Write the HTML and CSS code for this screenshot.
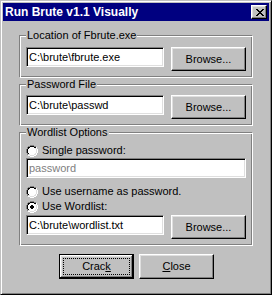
FILE: index.html
```html
<!DOCTYPE html>
<html lang="en">
<head>
<meta charset="utf-8">
<title>Run Brute v1.1 Visually</title>
<link rel="stylesheet" href="styles.css">
</head>
<body>
<svg class="defs" width="0" height="0" aria-hidden="true">
  <symbol id="radio" viewBox="0 0 12 12">
    <path fill="#808080" d="M4 0h4v1H4z M2 1h2v1H2z M8 1h2v1H8z M1 2h1v2H1z M0 4h1v4H0z M1 8h1v2H1z"/>
    <path fill="#000" d="M4 1h4v1H4z M2 2h2v1H2z M8 2h2v1H8z M2 3h1v1H2z M1 4h1v4H1z M2 8h1v1H2z"/>
    <path fill="#fff" d="M4 2h4v1H4z M10 2h1v1h-1z M3 3h6v1H3z M10 3h1v1h-1z M2 4h8v4H2z M11 4h1v4h-1z M3 8h6v1H3z M10 8h1v1h-1z M4 9h4v1H4z M10 9h1v1h-1z M2 10h2v1H2z M8 10h2v1H8z M4 11h4v1H4z"/>
    <path fill="#dfdfdf" d="M9 3h1v1H9z M10 4h1v4h-1z M9 8h1v1H9z M2 9h2v1H2z M8 9h2v1H8z M4 10h4v1H4z"/>
  </symbol>
</svg>
<div class="window">
  <div class="titlebar">
    <span class="title">Run Brute v1.1 Visually</span>
    <span class="caption-btn">
      <svg width="8" height="7" viewBox="0 0 8 7" shape-rendering="crispEdges"><path fill="#000" d="M0 0h2v1H0z M6 0h2v1H6z M1 1h2v1H1z M5 1h2v1H5z M2 2h4v1H2z M3 3h2v1H3z M2 4h4v1H2z M1 5h2v1H1z M5 5h2v1H5z M0 6h2v1H0z M6 6h2v1H6z"/></svg>
    </span>
  </div>
  <div class="client">
    <fieldset class="group g1">
      <legend>Location of Fbrute.exe</legend>
      <div class="row">
        <div class="edit">C:\brute\fbrute.exe</div>
        <div class="btn">Browse...</div>
      </div>
    </fieldset>
    <fieldset class="group g2">
      <legend>Password File</legend>
      <div class="row">
        <div class="edit">C:\brute\passwd</div>
        <div class="btn">Browse...</div>
      </div>
    </fieldset>
    <fieldset class="group g3">
      <legend>Wordlist Options</legend>
      <div class="radio opt-single">
        <svg width="12" height="12" shape-rendering="crispEdges"><use href="#radio"/></svg>
        <span>Single password:</span>
      </div>
      <div class="edit wide disabled">password</div>
      <div class="radio opt-user">
        <svg width="12" height="12" shape-rendering="crispEdges"><use href="#radio"/></svg>
        <span>Use username as password.</span>
      </div>
      <div class="radio opt-wordlist">
        <svg width="12" height="12" shape-rendering="crispEdges"><use href="#radio"/><path fill="#000" d="M5 4h2v1H5z M4 5h4v2H4z M5 7h2v1H5z"/></svg>
        <span>Use Wordlist:</span>
      </div>
      <div class="row row-wordlist">
        <div class="edit">C:\brute\wordlist.txt</div>
        <div class="btn">Browse...</div>
      </div>
    </fieldset>
    <div class="actions">
      <div class="btn push default"><span class="focus">Crac<u>k</u></span></div>
      <div class="btn push"><span><u>C</u>lose</span></div>
    </div>
  </div>
</div>
</body>
</html>
```
FILE: styles.css
```css
* { box-sizing: border-box; }
html, body { margin: 0; padding: 0; }
body {
  width: 272px;
  height: 295px;
  overflow: hidden;
  background: #c0c0c0;
  color: #000;
  font-family: "Liberation Sans", Arial, sans-serif;
  font-size: 11px;
  line-height: 13px;
}
.defs { position: absolute; width: 0; height: 0; overflow: hidden; }

.window {
  width: 272px;
  height: 295px;
  background: #c0c0c0;
  border: 1px solid;
  border-color: #c0c0c0 #000 #000 #c0c0c0;
  box-shadow: inset 1px 1px #fff, inset -1px -1px #808080;
  padding: 2px;
  display: flex;
  flex-direction: column;
}

.titlebar {
  height: 18px;
  flex: none;
  background: #000080;
  color: #fff;
  display: flex;
  align-items: center;
  justify-content: space-between;
  padding: 0 2px 0 2px;
}
.title {
  font-weight: bold;
  font-size: 12px;
  line-height: 18px;
  white-space: nowrap;
}
.caption-btn {
  width: 16px;
  height: 14px;
  background: #c0c0c0;
  border: 1px solid;
  border-color: #fff #000 #000 #fff;
  box-shadow: inset -1px -1px #808080, inset 1px 1px #dfdfdf;
  padding: 3px 0 0 4px;
}
.caption-btn svg { display: block; }

.client {
  padding: 8px 16px 0;
  display: flex;
  flex-direction: column;
}

.group {
  margin: 0;
  min-width: 0;
  padding: 5px 6px 6px;
  border: 1px solid;
  border-color: #808080 #fff #fff #808080;
  box-shadow: inset 1px 1px #fff, inset -1px -1px #808080;
}
.group.g2 { padding-top: 4px; }
.group legend {
  padding: 0 1px;
  line-height: 13px;
  background: #c0c0c0;
}

.row {
  display: flex;
  gap: 7px;
  align-items: flex-start;
}
.row-wordlist { margin-top: 2px; }

.edit {
  height: 20px;
  width: 138px;
  background: #fff;
  border: 1px solid;
  border-color: #808080 #fff #fff #808080;
  box-shadow: inset 1px 1px #000, inset -1px -1px #dfdfdf;
  padding: 0 2px;
  display: flex;
  align-items: center;
  white-space: nowrap;
  overflow: hidden;
}
.edit.wide { width: auto; margin-top: 1px; }
.edit.disabled { color: #808080; }

.btn {
  width: 75px;
  height: 24px;
  flex: none;
  background: #c0c0c0;
  border: 1px solid;
  border-color: #fff #000 #000 #fff;
  box-shadow: inset -1px -1px #808080, inset 1px 1px #dfdfdf;
  display: flex;
  align-items: center;
  justify-content: center;
  white-space: nowrap;
}
.btn.push { height: 25px; }
.btn.default {
  border-color: #000;
  box-shadow: inset -1px -1px #000, inset 1px 1px #fff, inset -2px -2px #808080, inset 2px 2px #dfdfdf;
  padding: 3px;
}
.focus {
  flex: 1;
  align-self: stretch;
  border: 1px dotted #000;
  display: flex;
  align-items: center;
  justify-content: center;
}

.radio {
  display: flex;
  align-items: center;
  gap: 4px;
  height: 13px;
  white-space: nowrap;
}
.radio svg { display: block; flex: none; }
.opt-user { margin-top: 7px; }
.opt-wordlist { margin-top: 2px; }

.actions {
  display: flex;
  gap: 5px;
  margin-top: 8px;
  padding-left: 40px;
}
```
